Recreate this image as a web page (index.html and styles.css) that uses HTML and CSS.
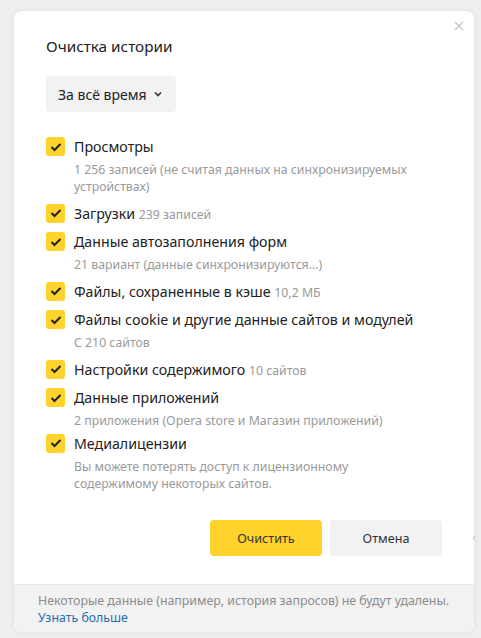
FILE: index.html
```html
<!DOCTYPE html>
<html lang="ru">
<head>
<meta charset="utf-8">
<link rel="stylesheet" href="styles.css">
</head>
<body>
<div class="page">
  <div class="dialog">
    <button class="close" aria-label="Закрыть">
      <svg width="10" height="10" viewBox="0 0 10 10"><path d="M1 1L9 9M9 1L1 9" stroke="#c4c4c4" stroke-width="1.1" fill="none"/></svg>
    </button>
    <div class="body">
      <h1 class="title">Очистка истории</h1>
      <div class="select">
        <span>За всё время</span>
        <svg width="8" height="6" viewBox="0 0 8 6"><path d="M1 1.5L4 4.5L7 1.5" stroke="#333" stroke-width="1.6" fill="none"/></svg>
      </div>
      <ul class="list">
        <li class="item">
          <span class="cb"><svg width="12" height="10" viewBox="0 0 12 10"><path d="M1.5 5L4.5 8L10.5 2" stroke="#222" stroke-width="2" fill="none"/></svg></span>
          <div class="text">
            <div class="label">Просмотры</div>
            <div class="desc">1 256 записей (не считая данных на синхронизируемых устройствах)</div>
          </div>
        </li>
        <li class="item">
          <span class="cb"><svg width="12" height="10" viewBox="0 0 12 10"><path d="M1.5 5L4.5 8L10.5 2" stroke="#222" stroke-width="2" fill="none"/></svg></span>
          <div class="text">
            <div class="label">Загрузки <span class="note">239 записей</span></div>
          </div>
        </li>
        <li class="item">
          <span class="cb"><svg width="12" height="10" viewBox="0 0 12 10"><path d="M1.5 5L4.5 8L10.5 2" stroke="#222" stroke-width="2" fill="none"/></svg></span>
          <div class="text">
            <div class="label">Данные автозаполнения форм</div>
            <div class="desc">21 вариант (данные синхронизируются...)</div>
          </div>
        </li>
        <li class="item">
          <span class="cb"><svg width="12" height="10" viewBox="0 0 12 10"><path d="M1.5 5L4.5 8L10.5 2" stroke="#222" stroke-width="2" fill="none"/></svg></span>
          <div class="text">
            <div class="label">Файлы, сохраненные в кэше <span class="note">10,2 МБ</span></div>
          </div>
        </li>
        <li class="item">
          <span class="cb"><svg width="12" height="10" viewBox="0 0 12 10"><path d="M1.5 5L4.5 8L10.5 2" stroke="#222" stroke-width="2" fill="none"/></svg></span>
          <div class="text">
            <div class="label">Файлы cookie и другие данные сайтов и модулей</div>
            <div class="desc">С 210 сайтов</div>
          </div>
        </li>
        <li class="item">
          <span class="cb"><svg width="12" height="10" viewBox="0 0 12 10"><path d="M1.5 5L4.5 8L10.5 2" stroke="#222" stroke-width="2" fill="none"/></svg></span>
          <div class="text">
            <div class="label">Настройки содержимого <span class="note">10 сайтов</span></div>
          </div>
        </li>
        <li class="item">
          <span class="cb"><svg width="12" height="10" viewBox="0 0 12 10"><path d="M1.5 5L4.5 8L10.5 2" stroke="#222" stroke-width="2" fill="none"/></svg></span>
          <div class="text">
            <div class="label">Данные приложений</div>
            <div class="desc">2 приложения (Opera store и Магазин приложений)</div>
          </div>
        </li>
        <li class="item item-tight">
          <span class="cb"><svg width="12" height="10" viewBox="0 0 12 10"><path d="M1.5 5L4.5 8L10.5 2" stroke="#222" stroke-width="2" fill="none"/></svg></span>
          <div class="text">
            <div class="label">Медиалицензии</div>
            <div class="desc">Вы можете потерять доступ к лицензионному содержимому некоторых сайтов.</div>
          </div>
        </li>
      </ul>
      <div class="actions">
        <button class="btn btn-primary">Очистить</button>
        <button class="btn btn-secondary">Отмена</button>
      </div>
    </div>
    <div class="footer">
      <div>Некоторые данные (например, история запросов) не будут удалены.</div>
      <a class="link" href="#">Узнать больше</a>
    </div>
  </div>
  <span class="side-chevron">‹</span>
</div>
</body>
</html>
```
FILE: styles.css
```css
* { box-sizing: border-box; }
html, body { margin: 0; padding: 0; }
body {
  background: #efefef;
  font-family: "Noto Sans", "Open Sans", "Liberation Sans", sans-serif;
  color: #222;
  width: 481px;
  height: 638px;
  overflow: hidden;
}
.page {
  position: relative;
  padding: 11px 0 0 14px;
}
.dialog {
  position: relative;
  width: 460px;
  height: 621px;
  background: #fff;
  border-radius: 8px;
  box-shadow: 0 0 6px rgba(0,0,0,0.07);
  display: flex;
  flex-direction: column;
  overflow: hidden;
}
.close {
  position: absolute;
  top: 9px;
  right: 9px;
  width: 12px;
  height: 12px;
  padding: 0;
  border: 0;
  background: none;
  display: flex;
  align-items: center;
  justify-content: center;
}
.body {
  flex: 1;
  padding: 24px 32px 0 32px;
  display: flex;
  flex-direction: column;
}
.title {
  margin: 0;
  font-size: 15.3px;
  font-weight: 400;
  line-height: 22px;
  color: #222;
}
.select {
  margin-top: 19px;
  align-self: flex-start;
  display: flex;
  align-items: center;
  gap: 8px;
  height: 36px;
  padding: 0 14px 0 12px;
  background: #f2f2f2;
  border-radius: 4px;
  font-size: 14px;
  color: #222;
}
.list {
  list-style: none;
  margin: 24px 0 0 0;
  padding: 0;
  display: flex;
  flex-direction: column;
  gap: 5.5px;
}
.item {
  display: flex;
  gap: 9px;
  align-items: flex-start;
}
.item-tight { margin-top: -4px; }
.cb {
  flex: none;
  width: 19px;
  height: 19px;
  margin-top: 1px;
  background: #fed42c;
  border-radius: 3px;
  display: flex;
  align-items: center;
  justify-content: center;
}
.label {
  font-size: 14.2px;
  line-height: 22px;
  color: #222;
}
.note {
  font-size: 12.3px;
  color: #9a9a9a;
}
.desc {
  margin-top: 3px;
  padding-bottom: 2px;
  font-size: 12.3px;
  line-height: 17px;
  color: #9a9a9a;
  max-width: 340px;
}
.actions {
  margin-top: auto;
  margin-bottom: 28px;
  display: flex;
  justify-content: flex-end;
  gap: 8px;
}
.btn {
  width: 112px;
  height: 36px;
  border: 0;
  border-radius: 4px;
  font-family: inherit;
  font-size: 12.6px;
  color: #333;
}
.btn-primary { background: #fed42c; }
.btn-secondary { background: #f2f2f2; }
.footer {
  flex: none;
  height: 48px;
  background: #f2f2f2;
  border-top: 1px solid #e6e6e6;
  padding: 7px 12px 0 24px;
  font-size: 12.35px;
  line-height: 17px;
  color: #8c8c8c;
  white-space: nowrap;
}
.link {
  color: #1f6fb0;
  text-decoration: none;
}
.side-chevron {
  position: absolute;
  left: 472px;
  top: 527px;
  font-size: 14px;
  color: #d0d0d0;
}
```
